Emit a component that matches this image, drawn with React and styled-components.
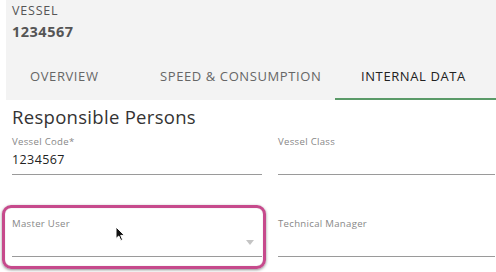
import React from "react";
import styled, { createGlobalStyle } from "styled-components";

const Global = createGlobalStyle`
  html, body { margin: 0; padding: 0; background: #fff; }
  body { font-family: "Open Sans", "DejaVu Sans", sans-serif; width: 496px; height: 272px; overflow: hidden; }
  * { box-sizing: border-box; }
`;

const Page = styled.div`
  position: relative;
  width: 496px;
  height: 272px;
`;

const Header = styled.div`
  margin-left: 6px;
  background: #f3f3f3;
  padding-top: 3px;
`;

const Kicker = styled.div`
  padding-left: 6px;
  font-size: 12.5px;
  line-height: 16px;
  color: #555;
  letter-spacing: 0.8px;
`;

const VesselId = styled.div`
  padding-left: 6px;
  font-size: 14.5px;
  font-weight: 700;
  line-height: 20px;
  color: #555;
  margin-top: 3px;
  letter-spacing: 0.5px;
`;

const Tabs = styled.div`
  display: flex;
  margin-top: 17px;
  height: 41px;
`;

const Tab = styled.div`
  flex: 0 0 ${(p) => p.$w}px;
  padding-left: ${(p) => p.$pl}px;
  font-size: 13px;
  letter-spacing: 0.6px;
  color: ${(p) => (p.$active ? "#222" : "#666")};
  line-height: 16px;
  padding-top: 9px;
  border-bottom: 2px solid ${(p) => (p.$active ? "#5a9a68" : "transparent")};
`;

const Section = styled.div`
  padding: 6px 1px 0 12px;
`;

const SectionTitle = styled.div`
  font-size: 18.5px;
  line-height: 22px;
  color: #333;
  letter-spacing: 0.3px;
`;

const Grid = styled.div`
  display: grid;
  grid-template-columns: 250px 217px;
  column-gap: 16px;
  row-gap: 40px;
  margin-top: 5px;
`;

const Field = styled.div`
  height: 42px;
  border-bottom: 1px solid #9a9a9a;
  position: relative;
`;

const Label = styled.div`
  font-size: 9.6px;
  line-height: 12px;
  color: #888;
  padding-top: 3px;
  letter-spacing: 0.3px;
`;

const Value = styled.div`
  font-size: 12.5px;
  line-height: 16px;
  color: #222;
  margin-top: 4px;
  letter-spacing: 0.4px;
`;

const Caret = styled.div`
  position: absolute;
  right: 8px;
  bottom: 11px;
  width: 0;
  height: 0;
  border-left: 4px solid transparent;
  border-right: 4px solid transparent;
  border-top: 5px solid #c4c4c4;
`;

const Highlight = styled.div`
  position: absolute;
  left: 2px;
  top: 205px;
  width: 264px;
  height: 64px;
  border: 3px solid #c64a8c;
  border-radius: 9px;
  box-shadow: 0 1px 3px rgba(0, 0, 0, 0.45), inset 0 0 1px rgba(0,0,0,0.3);
  pointer-events: none;
`;

const Cursor = styled.svg`
  position: absolute;
  left: 115px;
  top: 226px;
`;

export default function App() {
  return (
    <Page>
      <Global />
      <Header>
        <Kicker>VESSEL</Kicker>
        <VesselId>1234567</VesselId>
        <Tabs>
          <Tab $w={128} $pl={24}>OVERVIEW</Tab>
          <Tab $w={201} $pl={26}>SPEED &amp; CONSUMPTION</Tab>
          <Tab $w={161} $pl={26} $active>INTERNAL DATA</Tab>
        </Tabs>
      </Header>
      <Section>
        <SectionTitle>Responsible Persons</SectionTitle>
        <Grid>
          <Field>
            <Label>Vessel Code*</Label>
            <Value>1234567</Value>
          </Field>
          <Field>
            <Label>Vessel Class</Label>
          </Field>
          <Field>
            <Label>Master User</Label>
            <Caret />
          </Field>
          <Field>
            <Label>Technical Manager</Label>
          </Field>
        </Grid>
      </Section>
      <Highlight />
      <Cursor width="12" height="16" viewBox="0 0 12 16">
        <path d="M1 1 L1 12.5 L3.8 10 L5.8 14.5 L7.6 13.7 L5.7 9.4 L9.5 9.4 Z" fill="#111" stroke="#fff" strokeWidth="1" />
      </Cursor>
    </Page>
  );
}
